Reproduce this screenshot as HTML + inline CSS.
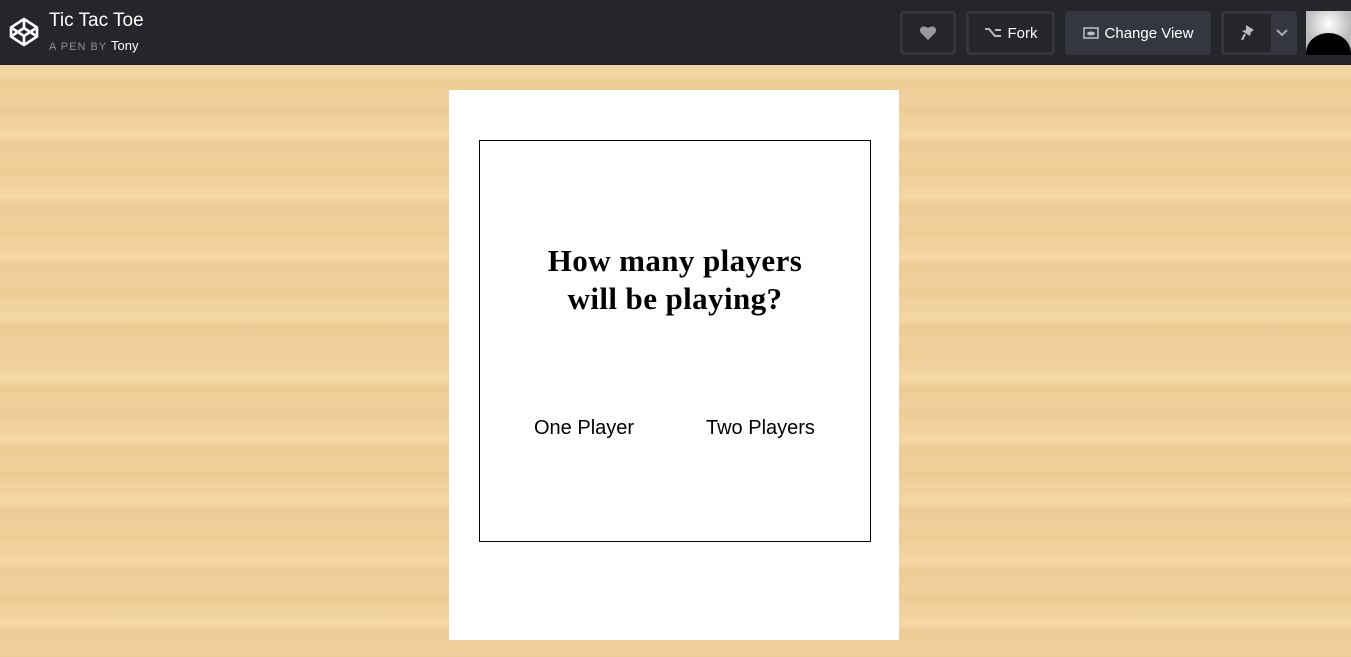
<!DOCTYPE html>
<html><head><style>
*{margin:0;padding:0;box-sizing:border-box}
body{width:1351px;height:657px;overflow:hidden;font-family:"Liberation Sans",sans-serif;position:relative;
background:
repeating-linear-gradient(180deg,rgba(255,235,190,0) 0,rgba(255,232,185,.35) 13px,rgba(225,175,105,.18) 23px,rgba(255,235,190,0) 37px,rgba(232,188,122,.22) 49px,rgba(255,230,180,.15) 61px),
#f0d09c;}
.hdr{position:absolute;left:0;top:0;width:1351px;height:65px;background:#25262b;}
.title{position:absolute;left:49px;top:10px;color:#fff;font-size:19px}
.by{position:absolute;left:49px;top:38px;color:#8d8f98;font-size:11px;letter-spacing:1px}
.by b{color:#fff;font-weight:normal;font-size:13px;letter-spacing:0}
.btn{position:absolute;top:11px;height:44px;border:3px solid #34353d;border-radius:4px;color:#fff;font-size:15px;display:flex;align-items:center;justify-content:center;gap:6px}
.card{position:absolute;left:449px;top:90px;width:450px;height:550px;background:#fff}
.box{position:absolute;left:30px;top:50px;width:392px;height:402px;border:1px solid #000}
h1{position:absolute;left:0;width:390px;top:101px;text-align:center;font:bold 31px/38px "Liberation Serif",serif;letter-spacing:.4px}
.opt{position:absolute;top:276px;font-size:20px}
</style></head><body>
<div class="hdr">
<svg style="position:absolute;left:8px;top:16px" width="32" height="32" viewBox="0 0 32 32" fill="none" stroke="#fff" stroke-width="2.6" stroke-linejoin="round"><path d="M16 3L29 11.5V20.5L16 29L3 20.5V11.5Z M3 11.5L16 20L29 11.5 M3 20.5L16 12L29 20.5 M16 3V12 M16 20V29"/></svg>
<div class="title">Tic Tac Toe</div>
<div class="by">A PEN BY <b>Tony</b></div>
<div class="btn" style="left:900px;width:56px"><svg width="18" height="16" viewBox="0 0 18 16"><path d="M9 15L2 8C-1 4 3-1 9 3C15-1 19 4 16 8Z" fill="#999"/></svg></div>
<div class="btn" style="left:966px;width:89px"><svg width="18" height="14" viewBox="0 0 18 14" fill="none" stroke="#bbb" stroke-width="2"><path d="M1 3H5L11 10H17M11 4H17"/></svg>Fork</div>
<div class="btn" style="left:1065px;width:146px;background:#343640;border-color:#343640"><svg width="16" height="12" viewBox="0 0 16 12"><rect x="1" y="1" width="14" height="10" fill="none" stroke="#bbb" stroke-width="1.6"/><ellipse cx="8" cy="6.5" rx="4" ry="2" fill="#bbb"/></svg>Change View</div>
<div class="btn" style="left:1221px;width:76px;background:#343640;border-color:#343640"><div style="position:absolute;left:0;top:0;width:47px;height:38px;background:#25262b"></div><svg style="position:absolute;left:16px;top:10px" width="16" height="18" viewBox="0 0 16 18"><path d="M6 1L14 6L11 8L10 12L2 7L6 6Z" fill="#bbb"/><path d="M5 10L2 16" stroke="#bbb" stroke-width="2"/></svg><svg style="position:absolute;left:52px;top:15px" width="12" height="8" viewBox="0 0 12 8"><path d="M1 1L6 6L11 1" fill="none" stroke="#aaa" stroke-width="2"/></svg></div>
<div style="position:absolute;left:1306px;top:11px;width:45px;height:44px;background:radial-gradient(circle at 50% 30%,#fff 0,#bbb 60%);overflow:hidden"><div style="position:absolute;left:0;top:22px;width:45px;height:40px;background:#000;border-radius:50% 50% 0 0"></div></div>
</div>
<div class="card"><div class="box">
<h1>How many players<br>will be playing?</h1>
<div class="opt" style="left:54px">One Player</div>
<div class="opt" style="left:226px">Two Players</div>
</div></div>
</body></html>
